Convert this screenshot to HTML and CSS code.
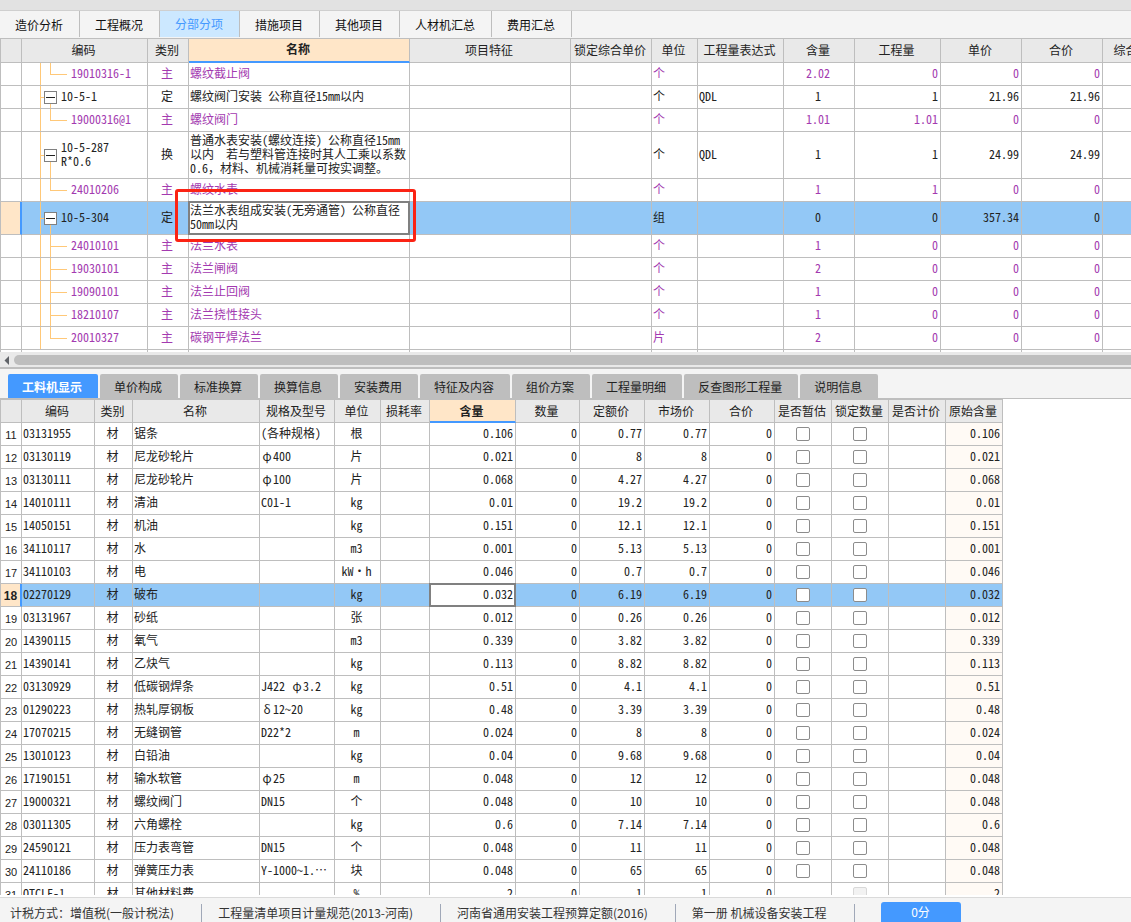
FILE: index.html
```html
<!DOCTYPE html>
<html lang="zh-CN">
<head>
<meta charset="utf-8">
<title>分部分项</title>
<link rel="stylesheet" href="styles.css">
</head>
<body>
<div class="app">
  <div class="title-strip"></div>
  <nav class="main-tabs">
    <button class="main-tab">造价分析</button>
    <button class="main-tab">工程概况</button>
    <button class="main-tab is-active">分部分项</button>
    <button class="main-tab">措施项目</button>
    <button class="main-tab">其他项目</button>
    <button class="main-tab">人材机汇总</button>
    <button class="main-tab">费用汇总</button>
  </nav>

  <section class="pane pane-items">
    <table class="grid grid-items">
      <colgroup>
        <col class="w-index"><col class="w-tree"><col class="w-kind"><col class="w-title"><col class="w-feature"><col class="w-81"><col class="w-46"><col class="w-86"><col class="w-71"><col class="w-86"><col class="w-81"><col class="w-81"><col class="w-last">
      </colgroup>
      <thead>
        <tr><th></th><th>编码</th><th>类别</th><th class="is-current">名称</th><th>项目特征</th><th>锁定综合单价</th><th>单位</th><th>工程量表达式</th><th>含量</th><th>工程量</th><th>单价</th><th>合价</th><th>综合合价</th></tr>
      </thead>
      <tbody id="items"></tbody>
    </table>
  </section>

  <div class="scrollbar">
    <svg class="scroll-arrow" width="14" height="11" viewBox="0 0 14 11"><path d="M9 1v9L4.500 5.500z" fill="#606368"/></svg>
    <div class="scroll-thumb"></div>
  </div>

  <nav class="detail-tabs">
    <button class="detail-tab is-active">工料机显示</button>
    <button class="detail-tab">单价构成</button>
    <button class="detail-tab">标准换算</button>
    <button class="detail-tab">换算信息</button>
    <button class="detail-tab">安装费用</button>
    <button class="detail-tab">特征及内容</button>
    <button class="detail-tab">组价方案</button>
    <button class="detail-tab">工程量明细</button>
    <button class="detail-tab">反查图形工程量</button>
    <button class="detail-tab">说明信息</button>
  </nav>

  <section class="pane pane-resources">
    <table class="grid grid-resources">
      <colgroup>
        <col class="w-index"><col class="w-73"><col class="w-38"><col class="w-127"><col class="w-75"><col class="w-46"><col class="w-49"><col class="w-86"><col class="w-64"><col class="w-65"><col class="w-65"><col class="w-65"><col class="w-57"><col class="w-57"><col class="w-57"><col class="w-57">
      </colgroup>
      <thead>
        <tr><th></th><th>编码</th><th>类别</th><th>名称</th><th>规格及型号</th><th>单位</th><th>损耗率</th><th class="is-current">含量</th><th>数量</th><th>定额价</th><th>市场价</th><th>合价</th><th>是否暂估</th><th>锁定数量</th><th>是否计价</th><th>原始含量</th></tr>
      </thead>
      <tbody id="resources"></tbody>
    </table>
  </section>

  <footer class="status">
    <span class="status-item">计税方式：增值税(一般计税法)</span>
    <span class="status-item">工程量清单项目计量规范(2013-河南)</span>
    <span class="status-item">河南省通用安装工程预算定额(2016)</span>
    <span class="status-item">第一册 机械设备安装工程</span>
    <button class="score">0分</button>
  </footer>
</div>
<script src="grid.js"></script>
</body>
</html>
```
FILE: styles.css
```css
* { box-sizing: border-box; }

body {
  margin: 0;
  background: #fff;
  color: #222;
  font: 12px/14px "Noto Sans CJK SC", sans-serif;
}

button { font: inherit; color: inherit; border: 0; padding: 0; margin: 0; }

.app {
  height: 100vh;
  display: flex;
  flex-direction: column;
  overflow: hidden;
}

.title-strip {
  flex: 0 0 11px;
  background: #e2e2e2;
  border-bottom: 1px solid #cfcfcf;
}

/* main tabs */
.main-tabs {
  flex: 0 0 28px;
  display: flex;
  background: #f4f4f4;
  border-bottom: 1px solid #bebebe;
  padding-bottom: 1px;
}
.main-tab {
  padding: 2px 16px 0 15px;
  background: #f4f4f4;
  border-right: 1px solid #bebebe;
  color: #111;
}
.main-tab.is-active { background: #cce8ff; color: #4499ff; padding-top: 0; }

/* grids */
.pane { overflow: hidden; background: #fff; }
.pane-items { flex: 0 0 313px; }
.pane-resources { flex: 1 1 0; margin-bottom: 2px; }

.grid {
  table-layout: fixed;
  border-collapse: separate;
  border-spacing: 0;
  border-left: 1px solid #bebebe;
  font-family: "Noto Sans Mono CJK SC", "Noto Sans CJK SC", monospace;
}
.grid-items { width: 1175px; }
.grid-resources { width: 1003px; border-top: 1px solid #bebebe; }

.w-index { width: 21px; }
.w-tree { width: 126px; }
.w-kind { width: 41px; }
.w-title { width: 221px; }
.w-feature { width: 161px; }
.w-last { width: 72px; }
.w-38 { width: 38px; }
.w-46 { width: 46px; }
.w-49 { width: 49px; }
.w-57 { width: 57px; }
.w-64 { width: 64px; }
.w-65 { width: 65px; }
.w-71 { width: 71px; }
.w-73 { width: 73px; }
.w-75 { width: 75px; }
.w-81 { width: 81px; }
.w-86 { width: 86px; }
.w-127 { width: 127px; }

.grid th, .grid td {
  height: 23px;
  padding: 0 2px 2px 1px;
  border-right: 1px solid #bebebe;
  border-bottom: 1px solid #bebebe;
  text-align: left;
  vertical-align: middle;
}
.grid th {
  padding: 0 2px 0 0;
  background: #e9e9e9;
  font-weight: 400;
  text-align: center;
  white-space: nowrap;
}
.grid-items th { height: 24px; padding-bottom: 2px; }
.grid th.is-current {
  background: #ffe6c8;
  border-bottom: 2px solid #4499ff;
  font-weight: 700;
}
.grid td.c { text-align: center; padding-right: 3px; }
.grid td.r { text-align: right; }
.grid td.clip { overflow: hidden; white-space: nowrap; }
.grid td.index {
  padding: 2px 0 0;
  font-family: "Liberation Sans", sans-serif;
  font-size: 11px;
  text-align: center;
}
.grid td.toggle-cell { padding: 0 1px 0 0; }
.grid td.origin { background: #fffaf5; }
.grid .child td { color: #a33ab0; }
.grid .tall td { height: 47px; }
.grid .selected-tall td { height: 33px; }
.grid .selected td { background-color: #93c8f6; }
.grid .selected td.index {
  background: #ffe6c8;
  border-right: 2px solid #4499ff;
  font-size: 12px;
  font-weight: 700;
}
.greek { display: inline-block; width: 12px; text-align: center; }

/* focused cell */
.grid .selected td.editing { position: relative; z-index: 1; background: #fff; }
.editing::after {
  content: "";
  position: absolute;
  inset: -1px;
  border: 2px solid #808080;
}
.callout {
  position: absolute;
  inset: -13px -7px -8px -14px;
  border: 3px solid #fb2314;
  border-radius: 3px;
}

/* tree column */
.grid td.tree {
  background-repeat: no-repeat;
  --line: linear-gradient(#ffc878, #ffc878);
}
.grid td.parent {
  padding: 0 0 0 22px;
  background-image: var(--line), var(--line), var(--line);
  background-size: 1px 100%, 4px 1px, 1px 50%;
  background-position: 18px 0, 18px 50%, 28px 100%;
}
.grid td.leaf {
  padding-left: 49px;
  background-image: var(--line), var(--line), var(--line);
  background-size: 1px 100%, 17px 1px, 1px 100%;
  background-position: 18px 0, 28px 50%, 28px 0;
}
.grid td.leaf.last { background-size: 1px 100%, 17px 1px, 1px 50%; }
.node { display: flex; align-items: center; gap: 4px; }
.node span { padding-bottom: 2px; }
.toggle {
  width: 13px;
  height: 13px;
  display: grid;
  place-items: center;
  background: #fff;
  border: 1px solid #808080;
}
.toggle::before { content: ""; width: 9px; height: 1px; background: #222; }

.check {
  appearance: none;
  display: block;
  width: 14px;
  height: 14px;
  margin: 0 auto;
  background: #fff;
  border: 1px solid #8c8c8c;
  border-radius: 2px;
}
.check:disabled { background: #f2f2f2; border-color: #d8d8d8; }

/* scrollbar */
.scrollbar {
  flex: 0 0 17px;
  display: flex;
  padding-top: 3px;
  background: #e9e9e9;
  border-bottom: 2px solid #bebebe;
}
.scroll-arrow { flex: none; }
.scroll-thumb { flex: 1; height: 10px; background: #bebebe; border-radius: 5px 0 0 5px; }

/* detail tabs */
.detail-tabs {
  flex: 0 0 30px;
  display: flex;
  gap: 2px;
  padding: 5px 8px 0;
  background: #f4f4f4;
  border-bottom: 1px solid #bebebe;
}
.detail-tab {
  padding: 2px 16px 0 14px;
  background: #bebebe;
  border-radius: 2px 2px 0 0;
}
.detail-tab.is-active { background: #4499ff; color: #fff; font-weight: 700; }

/* status bar */
.status {
  flex: 0 0 25px;
  display: flex;
  padding-left: 10px;
  background: #f4f4f4;
  border-top: 1px solid #dadada;
  color: #333;
}
.status-item {
  margin: 6px 16px 0 0;
  padding: 2px 27px 0 0;
  border-right: 1px solid #a0a8b8;
  white-space: nowrap;
}
.score {
  width: 80px;
  margin: 4px 0 0 10px;
  background: #4499ff;
  border-radius: 3px 3px 0 0;
  color: #fff;
}
```
FILE: grid.js
```js
// kind of row, code, category, name, unit, expression, content, quantity, price, total
const items = [
  ["last", "19010316-1", "主", "螺纹截止阀", "个", "", "2.02", "0", "0", "0"],
  ["parent", "10-5-1", "定", "螺纹阀门安装 公称直径15mm以内", "个", "QDL", "1", "1", "21.96", "21.96"],
  ["last", "19000316@1", "主", "螺纹阀门", "个", "", "1.01", "1.01", "0", "0"],
  ["tall", "10-5-287<br>R*0.6", "换", "普通水表安装(螺纹连接) 公称直径15mm以内　若与塑料管连接时其人工乘以系数0.6，材料、机械消耗量可按实调整。", "个", "QDL", "1", "1", "24.99", "24.99"],
  ["last", "24010206", "主", "螺纹水表", "个", "", "1", "1", "0", "0"],
  ["selected", "10-5-304", "定", "法兰水表组成安装(无旁通管) 公称直径50mm以内", "组", "", "0", "0", "357.34", "0"],
  ["leaf", "24010101", "主", "法兰水表", "个", "", "1", "0", "0", "0"],
  ["leaf", "19030101", "主", "法兰闸阀", "个", "", "2", "0", "0", "0"],
  ["leaf", "19090101", "主", "法兰止回阀", "个", "", "1", "0", "0", "0"],
  ["leaf", "18210107", "主", "法兰挠性接头", "个", "", "1", "0", "0", "0"],
  ["last", "20010327", "主", "碳钢平焊法兰", "片", "", "2", "0", "0", "0"],
  ["empty", "", "", "", "", "", "", "", "", ""]
];

const rowClass = {
  last: "child", leaf: "child", parent: "", tall: "tall",
  selected: "selected selected-tall", empty: ""
};

function treeCell(type, code) {
  if (type === "empty") return "<td></td>";
  if (type === "leaf" || type === "last") return `<td class="tree leaf ${type}">${code}</td>`;
  return `<td class="tree parent"><div class="node"><button class="toggle" aria-label="折叠"></button><span>${code}</span></div></td>`;
}

document.getElementById("items").innerHTML = items.map(
  ([type, code, kind, name, unit, expr, content, qty, price, total]) => {
    const title = type === "selected"
      ? `<td class="editing">${name}<div class="callout"></div></td>`
      : `<td>${name}</td>`;
    return `<tr class="${rowClass[type]}"><td class="index"></td>${treeCell(type, code)}
      <td class="c">${kind}</td>${title}<td></td><td></td><td>${unit}</td><td>${expr}</td>
      <td class="c">${content}</td><td class="r">${qty}</td><td class="r">${price}</td><td class="r">${total}</td><td></td></tr>`;
  }
).join("");

// code, name, specification, unit, content, price
const resources = [
  ["03131955", "锯条", "(各种规格)", "根", "0.106", "0.77"],
  ["03130119", "尼龙砂轮片", "φ400", "片", "0.021", "8"],
  ["03130111", "尼龙砂轮片", "φ100", "片", "0.068", "4.27"],
  ["14010111", "清油", "C01-1", "kg", "0.01", "19.2"],
  ["14050151", "机油", "", "kg", "0.151", "12.1"],
  ["34110117", "水", "", "m3", "0.001", "5.13"],
  ["34110103", "电", "", "kW·h", "0.046", "0.7"],
  ["02270129", "破布", "", "kg", "0.032", "6.19"],
  ["03131967", "砂纸", "", "张", "0.012", "0.26"],
  ["14390115", "氧气", "", "m3", "0.339", "3.82"],
  ["14390141", "乙炔气", "", "kg", "0.113", "8.82"],
  ["03130929", "低碳钢焊条", "J422 φ3.2", "kg", "0.51", "4.1"],
  ["01290223", "热轧厚钢板", "δ12~20", "kg", "0.48", "3.39"],
  ["17070215", "无缝钢管", "D22*2", "m", "0.024", "8"],
  ["13010123", "白铅油", "", "kg", "0.04", "9.68"],
  ["17190151", "输水软管", "φ25", "m", "0.048", "12"],
  ["19000321", "螺纹阀门", "DN15", "个", "0.048", "10"],
  ["03011305", "六角螺栓", "", "kg", "0.6", "7.14"],
  ["24590121", "压力表弯管", "DN15", "个", "0.048", "11"],
  ["24110186", "弹簧压力表", "Y-1000~1.…", "块", "0.048", "65"],
  ["QTCLF-1", "其他材料费", "", "%", "2", "1"]
];
const selectedCode = "02270129";

document.getElementById("resources").innerHTML = resources.map(
  ([code, name, spec, unit, content, price], i) => {
    const on = code === selectedCode;
    const fee = code === "QTCLF-1";
    const estimate = fee ? "" : `<input class="check" type="checkbox" aria-label="是否暂估 ${name}">`;
    const lock = `<input class="check" type="checkbox" aria-label="锁定数量 ${name}"${fee ? " disabled" : ""}>`;
    const size = spec.replace(/[φδ]/g, '<span class="greek">$&</span>');
    return `<tr class="${on ? "selected" : ""}"><td class="index">${i + 11}</td><td>${code}</td><td class="c">材</td>
      <td>${name}</td><td class="clip">${size}</td><td class="c">${unit}</td><td></td>
      <td class="r${on ? " editing" : ""}">${content}</td><td class="r">0</td><td class="r">${price}</td><td class="r">${price}</td>
      <td class="r">0</td><td class="toggle-cell">${estimate}</td><td class="toggle-cell">${lock}</td><td></td><td class="r origin">${content}</td></tr>`;
  }
).join("");
```
